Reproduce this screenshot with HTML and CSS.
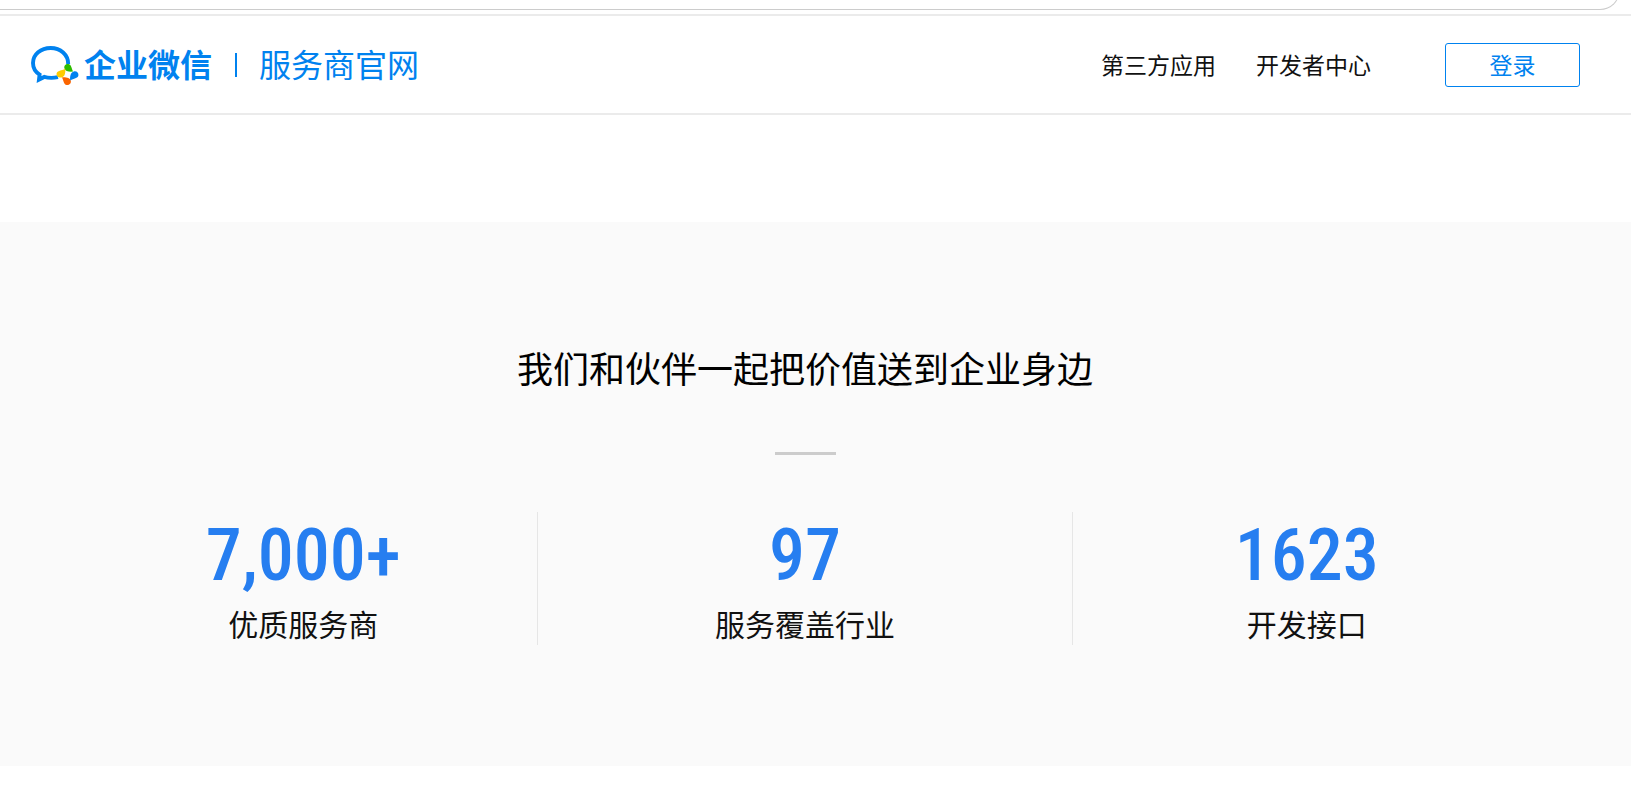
FILE: index.html
```html
<!DOCTYPE html>
<html lang="zh-CN">
<head>
    <meta charset="UTF-8">
    <meta name="viewport" content="width=device-width, initial-scale=1.0">
    <title>企业微信服务商官网</title>
    <link rel="stylesheet" href="styles.css">
</head>
<body>
    <div class="topbar">
        <div class="topbar-box"></div>
    </div>
    <header class="header">
        <a class="brand" href="#">
            <svg class="brand-icon" viewBox="0 0 50 42" width="50" height="42" aria-hidden="true">
                <path d="M38.2 20C38.2 10.8 30.5 4 20.7 4C10.7 4 3 10.6 3 19C3 24 5.5 28 9.6 30.6L9 35.6L14.3 32.9C18.5 34.2 23 34.2 28 33.2" fill="none" stroke="#0082ef" stroke-width="3.9"/>
                <path d="M34.6 25.4L42.8 27.6L40.6 36L32.4 33.6Z" fill="#fff"/>
                <path d="M43.2 27.6C39 28 35.2 27.4 34.4 24.2C33.8 21.4 36 19.4 38.6 20C41.6 20.8 41.4 24.4 43.2 27.6Z" fill="#2dbc00"/>
                <path d="M35.2 24.8C35.6 29 35 32.6 31.6 33.5C28.6 34.2 26.2 31.8 26.6 29.4C27.2 26.6 31.6 26.8 35.2 24.8Z" fill="#fc0"/>
                <path d="M32 33.4C36.4 33.2 40 33.8 40.8 36.8C41.4 39.4 39.2 41.4 36.6 41C33.6 40.2 33.8 37 32 33.4Z" fill="#fb6500"/>
                <path d="M40.2 36.4C39.8 32 40.6 28.4 43.8 27.5C46.6 26.8 48.8 29 48.4 31.4C47.8 34.4 43.8 34.2 40.2 36.4Z" fill="#0082ef"/>
            </svg>
            <span class="brand-name">企业微信</span>
            <span class="brand-line"></span>
            <span class="brand-sub">服务商官网</span>
        </a>
        <nav class="nav">
            <a href="#">第三方应用</a>
            <a href="#">开发者中心</a>
            <button class="login" type="button">登录</button>
        </nav>
    </header>
    <main class="partner">
        <h1>我们和伙伴一起把价值送到企业身边</h1>
        <div class="short-line"></div>
        <ul class="stats">
            <li>
                <strong>7,000+</strong>
                <span>优质服务商</span>
            </li>
            <li>
                <strong>97</strong>
                <span>服务覆盖行业</span>
            </li>
            <li>
                <strong>1623</strong>
                <span>开发接口</span>
            </li>
        </ul>
    </main>
</body>
</html>
```

FILE: styles.css
```css
* {
    box-sizing: border-box;
}
body {
    margin: 0;
    background: #fff;
    color: #111;
    font-family: "Noto Sans CJK SC", sans-serif;
}
a {
    color: inherit;
    text-decoration: none;
}
.topbar {
    display: flex;
    align-items: flex-end;
    height: 16px;
    padding: 0 11px 4px 0;
    border-bottom: 2px solid #ebebeb;
    overflow: hidden;
}
.topbar-box {
    flex: 1;
    height: 40px;
    border: 1px solid #ccc;
    border-left: 0;
    border-radius: 0 20px 20px 0;
}
.header {
    display: flex;
    align-items: center;
    justify-content: space-between;
    height: 99px;
    padding: 0 51px 0 30px;
    border-bottom: 2px solid #ebebeb;
}
.brand {
    display: flex;
    align-items: center;
    color: #0082ef;
    font-size: 32px;
    line-height: 44px;
}
.brand-icon {
    margin-right: 4px;
}
.brand-name,
.brand-sub {
    padding-bottom: 3px;
}
.brand-name {
    font-weight: 700;
}
.brand-line {
    width: 2px;
    height: 24px;
    margin: 0 22px 0 23px;
    background: #0082ef;
}
.nav {
    display: flex;
    align-items: center;
    gap: 40px;
    font-size: 23px;
}
.nav a {
    padding-bottom: 2px;
}
.login {
    width: 135px;
    height: 44px;
    margin-left: 34px;
    padding: 0 0 2px;
    border: 1px solid #0082ef;
    border-radius: 3px;
    background: #fff;
    color: #0082ef;
    font: inherit;
    line-height: 40px;
    cursor: pointer;
}
.partner {
    margin-top: 107px;
    padding: 118px 90px 121px 69px;
    background: #fafafa;
    text-align: center;
}
h1 {
    margin: 0;
    color: #000;
    font-size: 36px;
    font-weight: 400;
    line-height: 54px;
}
.short-line {
    width: 61px;
    height: 3px;
    margin: 58px auto 57px;
    background: #ccc;
}
.stats {
    display: grid;
    grid-template-columns: 7fr 8fr 7fr;
    margin: 0;
    padding: 0;
    list-style: none;
}
.stats li {
    height: 133px;
}
.stats li:nth-child(2) {
    border-left: 1px solid #e6e6e6;
    border-right: 1px solid #e6e6e6;
}
.stats strong {
    display: block;
    color: #267ef0;
    font-family: "Roboto Condensed", "Noto Sans CJK SC", sans-serif;
    font-size: 72px;
    font-weight: 500;
    line-height: 88px;
}
.stats span {
    display: block;
    font-size: 30px;
    line-height: 46px;
}
```
